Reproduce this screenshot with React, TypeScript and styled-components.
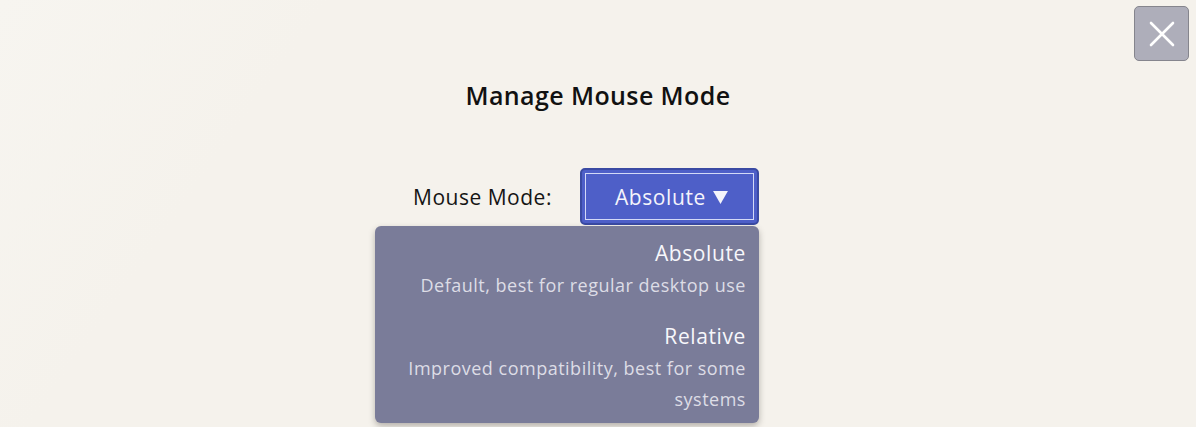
import React from "react";
import styled, { createGlobalStyle } from "styled-components";

const GlobalStyle = createGlobalStyle`
  html, body {
    margin: 0;
    padding: 0;
    background: #f5f2ec;
  }
  body {
    font-family: "Open Sans", "Noto Sans", sans-serif;
    color: #111;
  }
`;

type Option = {
  value: string;
  title: string;
  description: string;
};

const options: Option[] = [
  {
    value: "absolute",
    title: "Absolute",
    description: "Default, best for regular desktop use",
  },
  {
    value: "relative",
    title: "Relative",
    description: "Improved compatibility, best for some systems",
  },
];

export default function App() {
  const selected = options[0];

  return (
    <>
      <GlobalStyle />
      <Overlay>
        <CloseButton aria-label="Close">
          <svg width="26" height="26" viewBox="0 0 26 26">
            <path
              d="M2 2 L24 24 M24 2 L2 24"
              stroke="#fff"
              strokeWidth="2.6"
              strokeLinecap="round"
            />
          </svg>
        </CloseButton>

        <Title>Manage Mouse Mode</Title>

        <Row>
          <Label>Mouse Mode:</Label>
          <SelectWrap>
            <SelectButton>
              {selected.title}
              <Caret viewBox="0 0 16 14" aria-hidden="true">
                <path d="M0 0 H16 L8 14 Z" fill="currentColor" />
              </Caret>
            </SelectButton>
            <Menu>
              {options.map((option) => (
                <MenuItem key={option.value}>
                  <ItemTitle>{option.title}</ItemTitle>
                  <ItemDescription>{option.description}</ItemDescription>
                </MenuItem>
              ))}
            </Menu>
          </SelectWrap>
        </Row>
      </Overlay>
    </>
  );
}

const Overlay = styled.div`
  position: relative;
  height: 427px;
  overflow: hidden;
  display: flex;
  flex-direction: column;
  align-items: center;
  background: linear-gradient(
    125deg,
    #f7f5f0 0%,
    #f5f2ec 22%,
    #f5f2ec 100%
  );
`;

const CloseButton = styled.button`
  position: absolute;
  top: 6px;
  right: 7px;
  width: 55px;
  height: 55px;
  display: flex;
  align-items: center;
  justify-content: center;
  padding: 0;
  background: #aeaeba;
  border: 1px solid #85858d;
  border-radius: 5px;
  cursor: pointer;
`;

const Title = styled.h2`
  margin: 77px 0 0;
  font-size: 25px;
  font-weight: 600;
  letter-spacing: 0.4px;
  line-height: 36px;
  color: #111;
`;

const Row = styled.div`
  display: flex;
  align-items: center;
  gap: 28px;
  margin-top: 55px;
  padding-right: 24px;
`;

const Label = styled.span`
  font-size: 21px;
  letter-spacing: 0.5px;
  color: #151515;
`;

const SelectWrap = styled.div`
  position: relative;
`;

const SelectButton = styled.button`
  display: flex;
  align-items: center;
  justify-content: center;
  gap: 7px;
  width: 179px;
  height: 57px;
  padding: 0 0 0 4px;
  font-family: inherit;
  font-size: 21px;
  letter-spacing: 0.6px;
  color: #f4f4fb;
  background: #4e5fc8;
  border: 2px solid #3a4aa3;
  border-radius: 5px;
  outline: 1px solid rgba(235, 238, 255, 0.85);
  outline-offset: -6px;
  cursor: pointer;
`;

const Caret = styled.svg`
  width: 15px;
  height: 13px;
  margin-top: 2px;
`;

const Menu = styled.div`
  position: absolute;
  top: 58px;
  right: 0;
  width: 384px;
  box-sizing: border-box;
  padding: 10px 13px 0;
  background: #7a7c99;
  border-radius: 6px;
  box-shadow: 0 3px 6px rgba(60, 55, 50, 0.35);
  text-align: right;
`;

const MenuItem = styled.div`
  padding-bottom: 18px;

  &:last-child {
    padding-bottom: 8px;
  }
`;

const ItemTitle = styled.div`
  font-size: 21px;
  line-height: 34px;
  letter-spacing: 0.6px;
  color: #f7f7fb;
`;

const ItemDescription = styled.div`
  font-size: 18px;
  line-height: 31px;
  letter-spacing: 0.5px;
  color: #dddde6;
`;
